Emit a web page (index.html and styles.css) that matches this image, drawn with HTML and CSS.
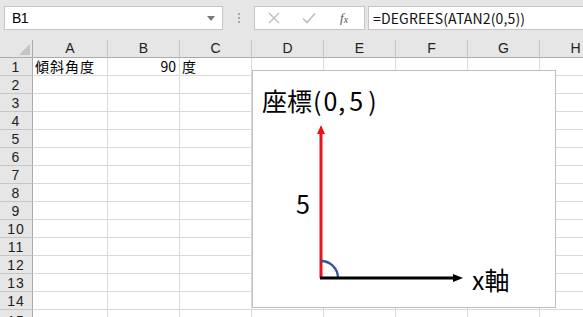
FILE: index.html
```html
<!DOCTYPE html>
<html lang="ja">
<head>
<meta charset="utf-8">
<link rel="stylesheet" href="styles.css">
</head>
<body>
<div class="app">
  <div class="toolbar">
    <div class="namebox">
      <span class="name">B1</span>
      <svg class="dd" width="8" height="5" viewBox="0 0 8 5"><path d="M0 0h8L4 5z" fill="#7a7a7a"/></svg>
    </div>
    <div class="vdots"><i></i><i></i><i></i></div>
    <div class="fbtns">
      <svg width="12" height="12" viewBox="0 0 12 12"><path d="M1 1l10 10M11 1L1 11" stroke="#bdbdbd" stroke-width="1.4" fill="none"/></svg>
      <svg width="14" height="12" viewBox="0 0 14 12"><path d="M1 6.5l4 4L13 1.5" stroke="#bdbdbd" stroke-width="1.6" fill="none"/></svg>
      <span class="fx">f<sub>x</sub></span>
    </div>
    <div class="formula">=DEGREES(ATAN2(0,5))</div>
  </div>
  <div class="sheet">
    <div class="grid">
      <div class="corner"><svg width="11" height="11" viewBox="0 0 11 11"><path d="M11 0v11H0z" fill="#c4c4c4"/></svg></div>
      <div class="ch">A</div><div class="ch">B</div><div class="ch">C</div><div class="ch">D</div><div class="ch">E</div><div class="ch">F</div><div class="ch">G</div><div class="ch">H</div>

      <div class="rh">1</div><div class="c">傾斜角度</div><div class="c num">90</div><div class="c">度</div><div class="c"></div><div class="c"></div><div class="c"></div><div class="c"></div><div class="c"></div>
      <div class="rh">2</div><div class="c"></div><div class="c"></div><div class="c"></div><div class="c"></div><div class="c"></div><div class="c"></div><div class="c"></div><div class="c"></div>
      <div class="rh">3</div><div class="c"></div><div class="c"></div><div class="c"></div><div class="c"></div><div class="c"></div><div class="c"></div><div class="c"></div><div class="c"></div>
      <div class="rh">4</div><div class="c"></div><div class="c"></div><div class="c"></div><div class="c"></div><div class="c"></div><div class="c"></div><div class="c"></div><div class="c"></div>
      <div class="rh">5</div><div class="c"></div><div class="c"></div><div class="c"></div><div class="c"></div><div class="c"></div><div class="c"></div><div class="c"></div><div class="c"></div>
      <div class="rh">6</div><div class="c"></div><div class="c"></div><div class="c"></div><div class="c"></div><div class="c"></div><div class="c"></div><div class="c"></div><div class="c"></div>
      <div class="rh">7</div><div class="c"></div><div class="c"></div><div class="c"></div><div class="c"></div><div class="c"></div><div class="c"></div><div class="c"></div><div class="c"></div>
      <div class="rh">8</div><div class="c"></div><div class="c"></div><div class="c"></div><div class="c"></div><div class="c"></div><div class="c"></div><div class="c"></div><div class="c"></div>
      <div class="rh">9</div><div class="c"></div><div class="c"></div><div class="c"></div><div class="c"></div><div class="c"></div><div class="c"></div><div class="c"></div><div class="c"></div>
      <div class="rh">10</div><div class="c"></div><div class="c"></div><div class="c"></div><div class="c"></div><div class="c"></div><div class="c"></div><div class="c"></div><div class="c"></div>
      <div class="rh">11</div><div class="c"></div><div class="c"></div><div class="c"></div><div class="c"></div><div class="c"></div><div class="c"></div><div class="c"></div><div class="c"></div>
      <div class="rh">12</div><div class="c"></div><div class="c"></div><div class="c"></div><div class="c"></div><div class="c"></div><div class="c"></div><div class="c"></div><div class="c"></div>
      <div class="rh">13</div><div class="c"></div><div class="c"></div><div class="c"></div><div class="c"></div><div class="c"></div><div class="c"></div><div class="c"></div><div class="c"></div>
      <div class="rh">14</div><div class="c"></div><div class="c"></div><div class="c"></div><div class="c"></div><div class="c"></div><div class="c"></div><div class="c"></div><div class="c"></div>
      <div class="rh last">15</div><div class="c"></div><div class="c"></div><div class="c"></div><div class="c"></div><div class="c"></div><div class="c"></div><div class="c"></div><div class="c"></div>
    </div>
    <div class="chart">
      <svg width="302" height="236" viewBox="0 0 302 236">
        <text class="t" x="9" y="40">座標<tspan dx="1">(</tspan><tspan dx="2">0</tspan><tspan dx="1">,</tspan><tspan dx="4">5</tspan><tspan dx="5">)</tspan></text>
        <line x1="68" y1="207" x2="68" y2="62" stroke="#e8131b" stroke-width="3"/>
        <path d="M64 63L68 54L72 63z" fill="#e8131b"/>
        <path d="M68 190 A17 17 0 0 1 85 207" stroke="#2f5597" stroke-width="2.4" fill="none"/>
        <line x1="67" y1="207" x2="202" y2="207" stroke="#000" stroke-width="3"/>
        <path d="M200 203L210 207L200 211z" fill="#000"/>
        <text class="t" x="43" y="143">5</text>
        <text class="t" x="219" y="219">x軸</text>
      </svg>
    </div>
  </div>
</div>
</body>
</html>
```
FILE: styles.css
```css
* { box-sizing: border-box; }
html, body { margin: 0; padding: 0; }
body { width: 583px; height: 317px; overflow: hidden; background: #fff; font-family: "Noto Sans CJK JP", "Noto Sans", sans-serif; color: #000; }
.app { display: flex; flex-direction: column; width: 583px; height: 317px; }
.toolbar { height: 40px; flex: none; background: #e6e6e6; display: flex; align-items: flex-start; padding: 6px 0 0 4px; }
.namebox { width: 219px; height: 24px; background: #fff; border: 1px solid #c6c6c6; display: flex; align-items: center; justify-content: space-between; padding: 0 7px 0 7px; }
.name { font-size: 14px; line-height: 1; font-family: "Liberation Sans", sans-serif; letter-spacing: -0.5px; }
.vdots { width: 31px; height: 24px; display: flex; flex-direction: column; align-items: center; justify-content: center; gap: 2px; }
.vdots i { width: 2px; height: 2px; background: #a8a8a8; display: block; }
.fbtns { width: 111px; height: 24px; background: #fff; border: 1px solid #c6c6c6; display: flex; align-items: center; padding: 0 0 0 13px; }
.fbtns svg:first-child { margin-right: 22px; }
.fbtns svg:nth-child(2) { margin-right: 24px; }
.fx { font-family: "Liberation Serif", serif; font-style: italic; font-size: 13px; color: #555; line-height: 1; }
.fx sub { font-size: 10px; vertical-align: -1px; }
.formula { flex: 1; height: 24px; margin-left: 3px; background: #fff; border: 1px solid #c6c6c6; border-right: none; font-size: 14px; line-height: 22px; padding-left: 4px; letter-spacing: 0.15px; color: #111; }
.sheet { position: relative; flex: 1; overflow: hidden; }
.grid { display: grid; grid-template-columns: 33px 75px 72px 72px 72px 72px 72px 72px 72px; grid-template-rows: 18px repeat(15, 18px); }
.corner { background: #e6e6e6; border-right: 1px solid #ababab; border-bottom: 1px solid #ababab; display: flex; align-items: flex-end; justify-content: flex-end; padding: 0 2px 2px 0; }
.ch { background: #e6e6e6; border-right: 1px solid #c6c6c6; border-bottom: 1px solid #ababab; text-align: center; font-family: "Liberation Sans", sans-serif; font-size: 14px; line-height: 17px; color: #222; }
.rh { background: #e6e6e6; border-right: 1px solid #ababab; border-bottom: 1px solid #c6c6c6; text-align: center; font-family: "Liberation Sans", sans-serif; font-size: 14px; line-height: 18px; color: #222; letter-spacing: 1px; }
.rh.last { line-height: 22px; }
.c { border-right: 1px solid #d9d9d9; border-bottom: 1px solid #d9d9d9; font-size: 14px; line-height: 17px; padding: 0 2px 0 2px; white-space: nowrap; letter-spacing: 1px; }
.c.num { text-align: right; letter-spacing: 0; padding-right: 3px; }
.chart { position: absolute; left: 252px; top: 30px; width: 304px; height: 238px; background: #fff; border: 1px solid #bfbfbf; }
.chart svg { display: block; }
.t { font-family: "Noto Sans CJK JP", "Noto Sans", sans-serif; font-size: 25px; fill: #000; }
```
